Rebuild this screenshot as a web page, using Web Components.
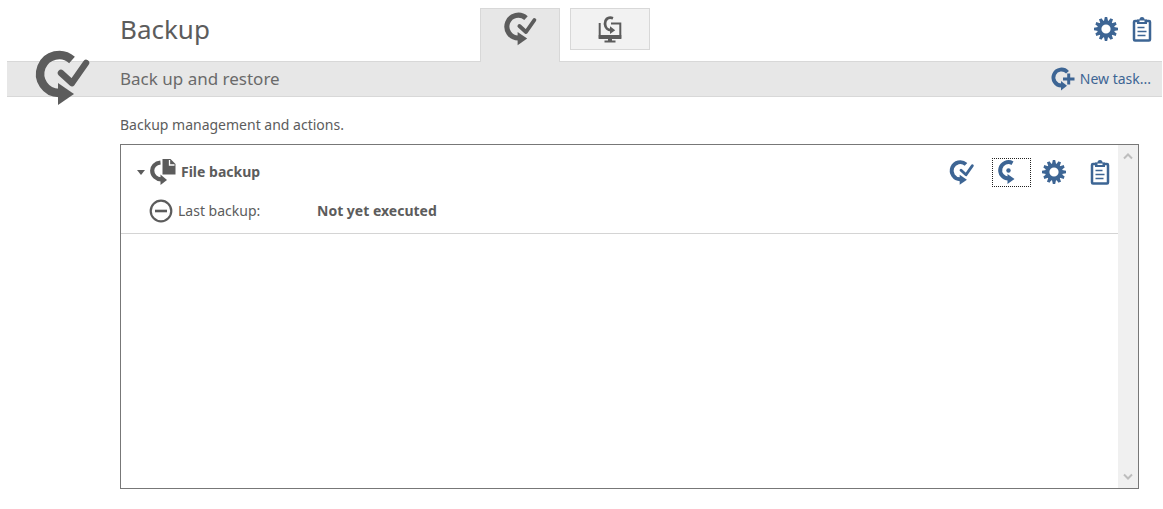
<!DOCTYPE html>
<html lang="en">
<head>
<meta charset="utf-8">
<title>Backup</title>
<style>
  body { margin: 0; background: #fff; color: #5c5c5c; font: 14px/20px "Noto Sans", "Open Sans", sans-serif; }
</style>
</head>
<body>
<backup-app></backup-app>
<script>
const ICONS = {
  check: ['0 0 60 60', '<path d="M40 12A19 19 0 1 0 27 45" fill="none" stroke="currentColor" stroke-width="8.500"/><path d="M26 35v22l16-11z" fill="currentColor"/><path d="M29 25l11 10 14-20" fill="none" stroke="currentColor" stroke-width="6.500" stroke-linecap="round" stroke-linejoin="round"/>'],
  restore: ['0 0 24 24', '<path d="M15.500 3.200A8.200 8.200 0 1 0 11.500 18.500" fill="none" stroke="currentColor" stroke-width="4"/><path d="M10.500 14v10l7-5z" fill="currentColor"/><circle cx="11.500" cy="10.500" r="2.200" fill="currentColor"/>'],
  plus: ['0 0 24 24', '<path d="M16.500 5.300A8 8 0 1 0 10.500 18.500" fill="none" stroke="currentColor" stroke-width="3.800"/><path d="M10 14v9.500l6-4.700z" fill="currentColor"/><path d="M12 12h11.500M17.700 6.500v11" stroke="currentColor" stroke-width="3"/>'],
  monitor: ['0 0 26 28', '<path d="M2.700 8v15h20.600V8.500H14" fill="none" stroke="currentColor" stroke-width="2"/><path d="M1.700 20h22.600v3.500H1.700zM11 23h4v2.500h3.500v2h-11v-2H11z" fill="currentColor"/><path d="M16 3.200C10.500 1.300 7.700 5 8 9c.3 3.700 3 6.200 6 6.200" fill="none" stroke="currentColor" stroke-width="2.800"/><path d="M13 11.300v7.700l5.200-3.800z" fill="currentColor"/>'],
  gear: ['0 0 24 24', '<g fill="currentColor">' + [0, 30, 60, 90, 120, 150].map(a => `<path d="M10.800 0h2.400l.8 4v16l-.8 4h-2.400l-.8-4V4z" transform="rotate(${a} 12 12)" mask="url(#h)"/>`).join('') + '</g><circle cx="12" cy="12" r="6.600" fill="none" stroke="currentColor" stroke-width="4"/>'],
  clipboard: ['0 0 20 25', '<rect x="2" y="4" width="16" height="19.500" rx="1" fill="none" stroke="currentColor" stroke-width="2.500"/><path d="M5 2.500h2.500a2.500 2.500 0 0 1 5 0H15V7H5z" fill="currentColor"/><path d="M7.500 3.500h5v1.500h-5z" fill="#fff"/><path d="M5.500 10.500h7M5.500 14.500h9M5.500 18.500h8" stroke="currentColor" stroke-width="1.700"/>'],
  file: ['0 0 26 26', '<path d="M10.500 3.500C5 4 2.200 8 2.200 11.500c0 5 4 8.500 9 8.800" fill="none" stroke="currentColor" stroke-width="4.200"/><path d="M10.500 15.500V26l6.500-5z" fill="currentColor"/><path d="M12.500 0h8L25.500 5v10.500h-13z" fill="currentColor"/><path d="M19.500 1v5h5" fill="none" stroke="#fff" stroke-width="1.300"/>'],
  minus: ['0 0 24 24', '<circle cx="12" cy="12" r="10.300" fill="none" stroke="currentColor" stroke-width="2.200"/><path d="M6 12h12" stroke="currentColor" stroke-width="2.600"/>'],
  caret: ['0 0 8 5', '<path d="M0 0h8L4 5z" fill="currentColor"/>'],
  up: ['0 0 10 8', '<path d="M1 6.500l4-4 4 4" fill="none" stroke="currentColor" stroke-width="2"/>'],
  down: ['0 0 10 8', '<path d="M1 1.500l4 4 4-4" fill="none" stroke="currentColor" stroke-width="2"/>']
};

class AppIcon extends HTMLElement {
  connectedCallback() {
    const [box, shape] = ICONS[this.getAttribute('name')];
    // The gear's teeth are spokes clipped to leave the hub open.
    const mask = '<mask id="h" maskUnits="userSpaceOnUse" x="0" y="0" width="24" height="24"><path fill="#fff" d="M0 0h24v24H0z"/><circle cx="12" cy="12" r="6"/></mask>';
    this.attachShadow({ mode: 'open' }).innerHTML = `
      <style>
        :host { display: block; flex: none; width: var(--w, 24px); height: var(--h, 24px); }
        svg { display: block; width: 100%; height: 100%; overflow: visible; }
      </style>
      <svg viewBox="${box}" aria-hidden="true">${this.getAttribute('name') === 'gear' ? mask : ''}${shape}</svg>`;
  }
}

class IconButton extends HTMLElement {
  connectedCallback() {
    this.attachShadow({ mode: 'open' }).innerHTML = `
      <style>
        :host { display: block; flex: none; color: #3d6594; }
        button { display: flex; align-items: center; justify-content: center; width: 100%; height: 100%; margin: 0;
          padding: 0; border: 0; background: none; color: inherit; font: inherit; white-space: nowrap; gap: 5px; }
        :host([current]) button { justify-content: flex-start; padding-left: 4px; border: 1px dotted #222; }
      </style>
      <button type="button"><slot></slot></button>`;
    const label = this.getAttribute('label');
    if (label) this.shadowRoot.querySelector('button').setAttribute('aria-label', label);
  }
}

class AppTab extends HTMLElement {
  connectedCallback() {
    this.attachShadow({ mode: 'open' }).innerHTML = `
      <style>
        :host { display: block; width: 80px; }
        button { display: flex; justify-content: center; align-items: center; box-sizing: border-box; width: 100%;
          height: 42px; margin: 0; padding: 0; border: 1px solid #d8d8d8; background: #f2f2f2; color: #5c5c5c; }
        :host([selected]) button { height: 54px; padding-bottom: 14px; border-bottom: 0; background: #e7e7e7; }
      </style>
      <button type="button" role="tab"><slot></slot></button>`;
    const button = this.shadowRoot.querySelector('button');
    button.setAttribute('aria-label', this.getAttribute('label'));
    button.setAttribute('aria-selected', this.hasAttribute('selected'));
  }
}

class AppHeader extends HTMLElement {
  connectedCallback() {
    this.attachShadow({ mode: 'open' }).innerHTML = `
      <style>
        :host { display: block; padding: 0 1px 0 7px; }
        .top { display: grid; grid-template-columns: 360px 1fr auto; height: 61px; padding: 0 10px 0 113px; box-sizing: border-box; }
        h1 { margin: 0; font-size: 26px; font-weight: 400; line-height: 58px; }
        .tabs { display: flex; align-items: flex-start; gap: 10px; padding-top: 8px; position: relative; z-index: 1; }
        .tools { display: flex; align-items: center; gap: 14px; height: 58px; }
        .bar { display: flex; align-items: center; justify-content: space-between; height: 36px; box-sizing: border-box;
          border: solid #d8d8d8; border-width: 1px 0; padding: 0 11px 0 113px; background: #e7e7e7; position: relative; }
        h2 { margin: 0; font-size: 17px; font-weight: 400; line-height: 34px; color: #6a6a6a; }
        .logo { position: absolute; left: 25px; top: -14px; --w: 60px; --h: 60px; }
      </style>
      <div class="top">
        <h1>Backup</h1>
        <div class="tabs" role="tablist">
          <app-tab selected label="Back up and restore"><app-icon name="check" style="--w:36px;--h:36px"></app-icon></app-tab>
          <app-tab label="System restore"><app-icon name="monitor" style="--w:26px;--h:28px"></app-icon></app-tab>
        </div>
        <div class="tools">
          <icon-button label="Settings"><app-icon name="gear"></app-icon></icon-button>
          <icon-button label="Logs"><app-icon name="clipboard" style="--w:20px;--h:25px"></app-icon></icon-button>
        </div>
      </div>
      <div class="bar">
        <app-icon class="logo" name="check"></app-icon>
        <h2>Back up and restore</h2>
        <icon-button><app-icon name="plus"></app-icon>New task...</icon-button>
      </div>`;
  }
}

class BackupTask extends HTMLElement {
  connectedCallback() {
    this.attachShadow({ mode: 'open' }).innerHTML = `
      <style>
        :host { display: block; height: 88px; border-bottom: 1px solid #d4d4d4; padding: 0 8px 0 16px; }
        .row { display: flex; align-items: center; }
        .head { height: 54px; gap: 5px; }
        .toggle { width: 8px; --w: 8px; --h: 5px; color: #5c5c5c; }
        .name { flex: 1; font-weight: 700; }
        .actions { display: flex; align-items: center; }
        .status { display: grid; grid-template-columns: 29px 139px 1fr; align-items: center; height: 24px; padding-left: 12px; }
        b { font-weight: 700; }
      </style>
      <div class="row head">
        <icon-button class="toggle" label="Collapse"><app-icon name="caret"></app-icon></icon-button>
        <app-icon name="file" style="--w:26px;--h:26px"></app-icon>
        <span class="name"><slot name="name"></slot></span>
        <div class="actions">
          <icon-button label="Back up" style="margin-right:17px"><app-icon name="check" style="--w:27px;--h:27px"></app-icon></icon-button>
          <icon-button current label="Restore" style="width:39px;height:29px;margin-right:11px"><app-icon name="restore"></app-icon></icon-button>
          <icon-button label="Settings" style="margin-right:24px"><app-icon name="gear"></app-icon></icon-button>
          <icon-button label="Logs"><app-icon name="clipboard" style="--w:20px;--h:25px"></app-icon></icon-button>
        </div>
      </div>
      <div class="status">
        <app-icon name="minus"></app-icon><span>Last backup:</span><b><slot name="status"></slot></b>
      </div>`;
  }
}

class TaskList extends HTMLElement {
  connectedCallback() {
    this.attachShadow({ mode: 'open' }).innerHTML = `
      <style>
        :host { display: flex; box-sizing: border-box; border: 1px solid #777; flex: 1; }
        .items { flex: 1; min-width: 0; }
        .scroll { display: flex; flex-direction: column; justify-content: space-between; width: 20px; background: #f0f0f0; --w: 10px; --h: 8px; }
        icon-button { height: 22px; color: #bdbdbd; }
      </style>
      <div class="items"><slot></slot></div>
      <div class="scroll">
        <icon-button label="Scroll up"><app-icon name="up"></app-icon></icon-button>
        <icon-button label="Scroll down"><app-icon name="down"></app-icon></icon-button>
      </div>`;
  }
}

class BackupApp extends HTMLElement {
  connectedCallback() {
    this.attachShadow({ mode: 'open' }).innerHTML = `
      <style>
        :host { display: flex; flex-direction: column; min-height: 100vh; }
        main { flex: 1; display: flex; flex-direction: column; padding: 18px 24px 20px 120px; }
        p { margin: 0 0 9px; }
      </style>
      <app-header></app-header>
      <main>
        <p>Backup management and actions.</p>
        <task-list>
          <backup-task><span slot="name">File backup</span><span slot="status">Not yet executed</span></backup-task>
        </task-list>
      </main>`;
  }
}

customElements.define('app-icon', AppIcon);
customElements.define('icon-button', IconButton);
customElements.define('app-tab', AppTab);
customElements.define('app-header', AppHeader);
customElements.define('backup-task', BackupTask);
customElements.define('task-list', TaskList);
customElements.define('backup-app', BackupApp);
</script>
</body>
</html>
